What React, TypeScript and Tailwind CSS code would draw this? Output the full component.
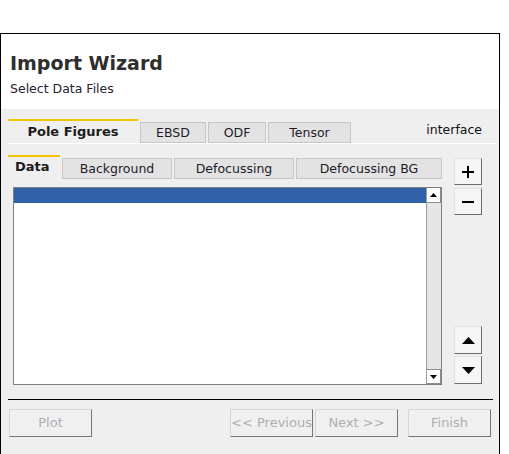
import React from "react";

const FONT = "font-['DejaVu_Sans',Verdana,sans-serif]";

function Tab({ label, width, selected }: { label: string; width: string; selected?: boolean }) {
  if (selected) {
    return (
      <div
        className={`${width} h-full border-t-2 border-[#f5c300] bg-[#efefef] pt-[3px] text-center text-[13px] leading-[16px] font-bold text-[#1c1c1c]`}
      >
        {label}
      </div>
    );
  }
  return (
    <div
      className={`${width} ml-[2px] flex h-[21px] items-center justify-center border border-[#c6c6c6] bg-[#e3e3e3] text-[12.5px] leading-[15px] text-[#221a2a]`}
    >
      {label}
    </div>
  );
}

function SideButton({ children, className }: { children: React.ReactNode; className?: string }) {
  return (
    <div
      className={`flex w-[28px] items-center justify-center border border-t-[#e2e2e2] border-l-[#e2e2e2] border-r-[#6c6c6c] border-b-[#6c6c6c] bg-[#f6f6f6] ${className ?? ""}`}
    >
      {children}
    </div>
  );
}

function WizardButton({ label, className }: { label: string; className?: string }) {
  return (
    <div
      className={`flex h-[28px] w-[83px] items-center justify-center overflow-hidden whitespace-nowrap border border-t-[#d6d6de] border-l-[#d6d6de] border-r-[#74747e] border-b-[#74747e] bg-[#f0f0f0] text-[13px] text-[#aeaeb2] ${className ?? ""}`}
    >
      {label}
    </div>
  );
}

function Arrow({ up, w, h }: { up?: boolean; w: number; h: number }) {
  return (
    <svg width={w} height={h} viewBox={`0 0 ${w} ${h}`}>
      <polygon
        points={up ? `0,${h} ${w},${h} ${w / 2},0` : `0,0 ${w},0 ${w / 2},${h}`}
        fill="#000"
      />
    </svg>
  );
}

export default function App() {
  return (
    <div className={`h-[454px] w-[509px] overflow-hidden bg-white pt-[33px] ${FONT}`}>
      <div className="flex h-[421px] w-[500px] flex-col border-l border-r border-t border-black">
        {/* header */}
        <div className="h-[75px] shrink-0 bg-white pl-[9px] pt-[18px] text-[#2e2e2e]">
          <div className="text-[19px] font-bold leading-[22px]">Import Wizard</div>
          <div className="mt-[8px] text-[12.5px] leading-[14px] text-[#2a2230]">Select Data Files</div>
        </div>

        <div className="flex flex-1 flex-col bg-[#efefef] pl-[7px]">
          {/* top tabs */}
          <div className="mt-[10px] flex h-[25px] w-[488px] items-end border-b border-white">
            <Tab label="Pole Figures" width="w-[130px]" selected />
            <Tab label="EBSD" width="w-[66px]" />
            <Tab label="ODF" width="w-[58px]" />
            <Tab label="Tensor" width="w-[83px]" />
            <div className="mb-[5px] ml-auto mr-[14px] self-start pt-[3px] text-[12.5px] leading-[15px] text-[#111]">
              interface
            </div>
          </div>

          {/* content */}
          <div className="mt-[11px] flex">
            <div className="flex w-[434px] flex-col">
              <div className="flex h-[24px] items-end">
                <div className="h-full w-[52px] border-t-2 border-[#f5c300] pl-[7px] pt-[2px] text-[13px] leading-[16px] font-bold text-[#1c1c1c]">
                  Data
                </div>
                <Tab label="Background" width="w-[110px]" />
                <Tab label="Defocussing" width="w-[120px]" />
                <Tab label="Defocussing BG" width="w-[146px]" />
              </div>

              <div className="ml-[5px] mt-[8px] flex h-[198px] w-[429px] border border-[#7f7f7f] bg-white">
                <div className="flex-1">
                  <div className="h-[15px] bg-[#3161a8]" />
                </div>
                <div className="flex w-[15px] flex-col justify-between border-l border-[#9c9c9c] bg-[#e6e6e6]">
                  <div className="flex h-[15px] items-center justify-center border-b border-r border-[#8c8c8c] bg-white">
                    <Arrow up w={7} h={4} />
                  </div>
                  <div className="flex h-[15px] items-center justify-center border-b border-r border-t border-[#8c8c8c] bg-white">
                    <Arrow w={7} h={4} />
                  </div>
                </div>
              </div>
            </div>

            <div className="ml-[12px] flex flex-col pb-[1px] pt-[3px]">
              <SideButton className="h-[27px]">
                <svg width="12" height="12" viewBox="0 0 12 12">
                  <rect x="0" y="5" width="12" height="2" fill="#000" />
                  <rect x="5" y="0" width="2" height="12" fill="#000" />
                </svg>
              </SideButton>
              <SideButton className="mt-[3px] h-[27px]">
                <svg width="12" height="2" viewBox="0 0 12 2">
                  <rect x="0" y="0" width="12" height="2" fill="#000" />
                </svg>
              </SideButton>
              <div className="flex-1" />
              <SideButton className="h-[28px]">
                <Arrow up w={13} h={7} />
              </SideButton>
              <SideButton className="mt-[2px] h-[28px]">
                <Arrow w={13} h={7} />
              </SideButton>
            </div>
          </div>

          <div className="mt-[14px] h-px w-[485px] bg-black" />

          <div className="mt-[9px] flex">
            <WizardButton label="Plot" className="ml-[1px]" />
            <WizardButton label="<< Previous" className="ml-[138px]" />
            <WizardButton label="Next >>" className="ml-[2px]" />
            <WizardButton label="Finish" className="ml-[10px]" />
          </div>
        </div>
      </div>
    </div>
  );
}
